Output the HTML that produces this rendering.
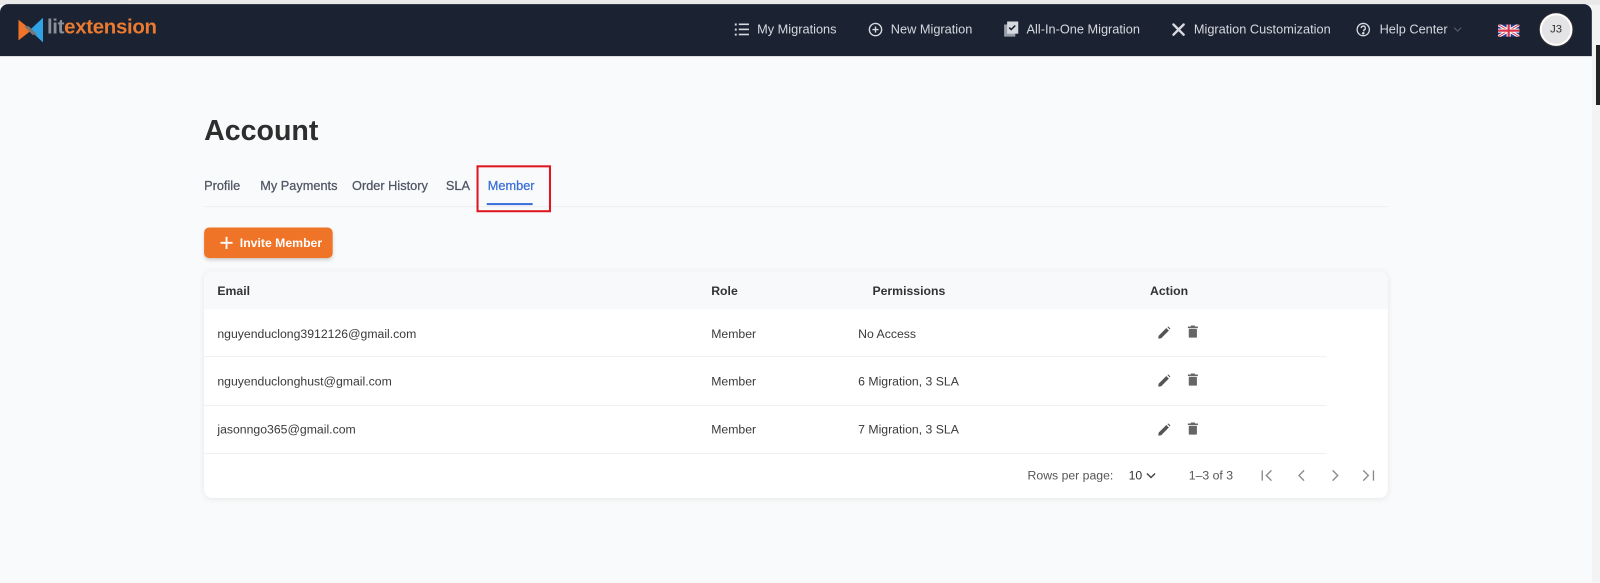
<!DOCTYPE html>
<html><head><meta charset="utf-8"><style>
*{box-sizing:border-box;margin:0;padding:0}
body{width:1600px;height:582px;overflow:hidden;background:#f9fafb;font-family:"Liberation Sans",sans-serif;position:relative;color:#333}
#w{position:absolute;left:0;top:0;width:1568px;height:571px;transform:scale(1.0204);transform-origin:0 0}
.abs{position:absolute}
.top{left:0;top:0;width:1568px;height:5px;background:#e9e9ea}
.nav{left:0;top:4px;width:1560px;height:51px;background:#1b2232;border-radius:8px 8px 0 0}
.navt{color:#d6d9de;font-size:12.5px;top:22px;white-space:nowrap}
.tab{top:175px;font-size:12.5px;color:#4f5663;-webkit-text-stroke:0.25px #4f5663}
.th{font-size:12px;font-weight:bold;color:#333}
.td{font-size:12px;color:#3a3a3a}
.line{height:1px;background:#eef0f2}
.pg{top:459px;font-size:12px;color:#555}
</style></head><body>
<div class="abs" style="left:1592px;top:0;width:8px;height:582px;background:#f3f3f3"></div>
<div class="abs" style="left:1596px;top:45px;width:4px;height:60px;background:#222"></div>
<div id="w">
<div class="abs top"></div>
<div class="abs nav"></div>
<!-- logo -->
<svg class="abs" style="left:18px;top:17px" width="26" height="25" viewBox="0 0 28 26"><polygon points="0,2 14,13 0,24" fill="#f07427"/><polygon points="26,0 26,26 12,13" fill="#2fa3e6"/><polygon points="6,9 11,9 20,18 15,18" fill="#777"/></svg>
<div class="abs" style="left:46px;top:16px;font-size:20px;font-weight:bold;letter-spacing:-0.3px"><span style="color:#8a8f98">lit</span><span style="color:#ec7a2f">extension</span></div>
<!-- nav items -->
<svg class="abs" style="left:720px;top:23px" width="14" height="12" viewBox="0 0 14 12" fill="#d6d9de"><rect x="0" y="0" width="2" height="2"/><rect x="0" y="5" width="2" height="2"/><rect x="0" y="10" width="2" height="2"/><rect x="4" y="0" width="10" height="1.6"/><rect x="4" y="5" width="10" height="1.6"/><rect x="4" y="10" width="10" height="1.6"/></svg>
<div class="abs navt" style="left:742px">My Migrations</div>
<svg class="abs" style="left:851px;top:22px" width="14" height="14" viewBox="0 0 14 14" fill="none" stroke="#d6d9de" stroke-width="1.4"><circle cx="7" cy="7" r="6"/><path d="M7 4v6M4 7h6"/></svg>
<div class="abs navt" style="left:873px">New Migration</div>
<svg class="abs" style="left:984px;top:21px" width="14" height="15" viewBox="0 0 14 15"><rect x="0" y="3" width="11" height="12" fill="#9aa0aa"/><rect x="3" y="0" width="11" height="12" fill="#d6d9de"/><path d="M5 6l2 2 4-4" stroke="#1b2232" stroke-width="1.5" fill="none"/></svg>
<div class="abs navt" style="left:1006px">All-In-One Migration</div>
<svg class="abs" style="left:1148px;top:22px" width="14" height="14" viewBox="0 0 14 14" stroke="#d6d9de" stroke-width="2.4" stroke-linecap="round"><path d="M2 2l10 10M12 2L2 12"/></svg>
<div class="abs navt" style="left:1170px">Migration Customization</div>
<svg class="abs" style="left:1329px;top:22px" width="14" height="14" viewBox="0 0 14 14" fill="none" stroke="#d6d9de" stroke-width="1.3"><circle cx="7" cy="7" r="6"/><path d="M5 5.5a2 2 0 1 1 2.5 2v1.3"/><circle cx="7" cy="10.6" r=".6" fill="#d6d9de"/></svg>
<div class="abs navt" style="left:1352px">Help Center</div>
<svg class="abs" style="left:1424px;top:26px" width="9" height="6" viewBox="0 0 9 6"><path d="M1 1l3.5 3.5L8 1" stroke="#5c6370" fill="none"/></svg>
<svg class="abs" style="left:1468px;top:24px" width="21" height="12" viewBox="0 0 21 12"><rect width="21" height="12" fill="#2a3b8f"/><path d="M0 0L21 12M21 0L0 12" stroke="#fff" stroke-width="3"/><path d="M0 0L21 12M21 0L0 12" stroke="#d8334a" stroke-width="1"/><path d="M10.5 0v12M0 6h21" stroke="#fff" stroke-width="4"/><path d="M10.5 0v12M0 6h21" stroke="#d8334a" stroke-width="2.2"/></svg>
<div class="abs" style="left:1509px;top:13px;width:32px;height:32px;border-radius:50%;background:#e4e4e6;border:2px solid #fff;box-shadow:0 0 0 1px #333;font-size:11px;color:#333;text-align:center;line-height:28px">J3</div>
<!-- heading -->
<div class="abs" style="left:200px;top:112px;font-size:28px;font-weight:bold;color:#2e2e2e">Account</div>
<div class="abs tab" style="left:200px">Profile</div>
<div class="abs tab" style="left:255px">My Payments</div>
<div class="abs tab" style="left:345px">Order History</div>
<div class="abs tab" style="left:437px">SLA</div>
<div class="abs tab" style="left:478px;color:#3a6fd8;-webkit-text-stroke:0.25px #3a6fd8">Member</div>
<div class="abs" style="left:200px;top:202px;width:1160px;height:1px;background:#eceef1"></div>
<div class="abs" style="left:477px;top:199px;width:45px;height:2px;background:#3a6fd8"></div>
<div class="abs" style="left:467px;top:162px;width:73px;height:46px;border:2px solid #e0161e"></div>
<!-- button -->
<div class="abs" style="left:200px;top:223px;width:126px;height:30px;background:#f07427;border-radius:5px;box-shadow:0 2px 3px rgba(0,0,0,.15);color:#fff;font-size:12px;font-weight:bold;line-height:30px;padding-left:35px">Invite Member</div>
<svg class="abs" style="left:216px;top:232px" width="12" height="12" viewBox="0 0 12 12"><path d="M6 0v12M0 6h12" stroke="#fff" stroke-width="1.8"/></svg>
<!-- table -->
<div class="abs" style="left:200px;top:266px;width:1160px;height:222px;background:#fff;border-radius:8px;box-shadow:0 1px 6px rgba(0,0,0,.08);overflow:hidden"><div style="height:37px;background:#f8f9fb"></div></div>
<div class="abs th" style="left:213px;top:278px">Email</div>
<div class="abs th" style="left:697px;top:278px">Role</div>
<div class="abs th" style="left:855px;top:278px">Permissions</div>
<div class="abs th" style="left:1127px;top:278px">Action</div>

<div class="abs td" style="left:213px;top:320px">nguyenduclong3912126@gmail.com</div>
<div class="abs td" style="left:697px;top:320px">Member</div>
<div class="abs td" style="left:841px;top:320px">No Access</div>
<div class="abs line" style="left:200px;top:349px;width:1100px"></div>
<div class="abs td" style="left:213px;top:367px">nguyenduclonghust@gmail.com</div>
<div class="abs td" style="left:697px;top:367px">Member</div>
<div class="abs td" style="left:841px;top:367px">6 Migration, 3 SLA</div>
<div class="abs line" style="left:200px;top:397px;width:1100px"></div>
<div class="abs td" style="left:213px;top:414px">jasonngo365@gmail.com</div>
<div class="abs td" style="left:697px;top:414px">Member</div>
<div class="abs td" style="left:841px;top:414px">7 Migration, 3 SLA</div>
<div class="abs line" style="left:200px;top:444px;width:1100px"></div>

<svg class="abs" style="left:1135px;top:320px" width="12" height="12" viewBox="0 0 12 12"><path d="M0 12l.5-3L8 1.5l2.5 2.5L3 11.5z M9 .5l1-.5 2 2-.5 1z" fill="#555"/></svg>
<svg class="abs" style="left:1164px;top:319px" width="10" height="12" viewBox="0 0 10 12" fill="#666"><rect x="0" y="1" width="10" height="1.6"/><rect x="3" y="0" width="4" height="1.5"/><rect x="1" y="3.3" width="8" height="8.7" rx=".8"/></svg>
<svg class="abs" style="left:1135px;top:367px" width="12" height="12" viewBox="0 0 12 12"><path d="M0 12l.5-3L8 1.5l2.5 2.5L3 11.5z M9 .5l1-.5 2 2-.5 1z" fill="#555"/></svg>
<svg class="abs" style="left:1164px;top:366px" width="10" height="12" viewBox="0 0 10 12" fill="#666"><rect x="0" y="1" width="10" height="1.6"/><rect x="3" y="0" width="4" height="1.5"/><rect x="1" y="3.3" width="8" height="8.7" rx=".8"/></svg>
<svg class="abs" style="left:1135px;top:415px" width="12" height="12" viewBox="0 0 12 12"><path d="M0 12l.5-3L8 1.5l2.5 2.5L3 11.5z M9 .5l1-.5 2 2-.5 1z" fill="#555"/></svg>
<svg class="abs" style="left:1164px;top:414px" width="10" height="12" viewBox="0 0 10 12" fill="#666"><rect x="0" y="1" width="10" height="1.6"/><rect x="3" y="0" width="4" height="1.5"/><rect x="1" y="3.3" width="8" height="8.7" rx=".8"/></svg>

<div class="abs pg" style="left:1007px">Rows per page:</div>
<div class="abs pg" style="left:1106px;color:#333">10</div>
<svg class="abs" style="left:1123px;top:463px" width="10" height="7" viewBox="0 0 10 7"><path d="M1 1l4 4 4-4" stroke="#444" stroke-width="1.4" fill="none"/></svg>
<div class="abs pg" style="left:1165px">1–3 of 3</div>
<svg class="abs" style="left:1235px;top:459px" width="140" height="14" viewBox="0 0 140 14" fill="none" stroke="#888" stroke-width="1.3"><path d="M2 2v10M11 2L6 7l5 5"/><path d="M43 2l-5 5 5 5"/><path d="M71 2l5 5-5 5"/><path d="M101 2l5 5-5 5M111 2v10"/></svg>
</div>
</body></html>
